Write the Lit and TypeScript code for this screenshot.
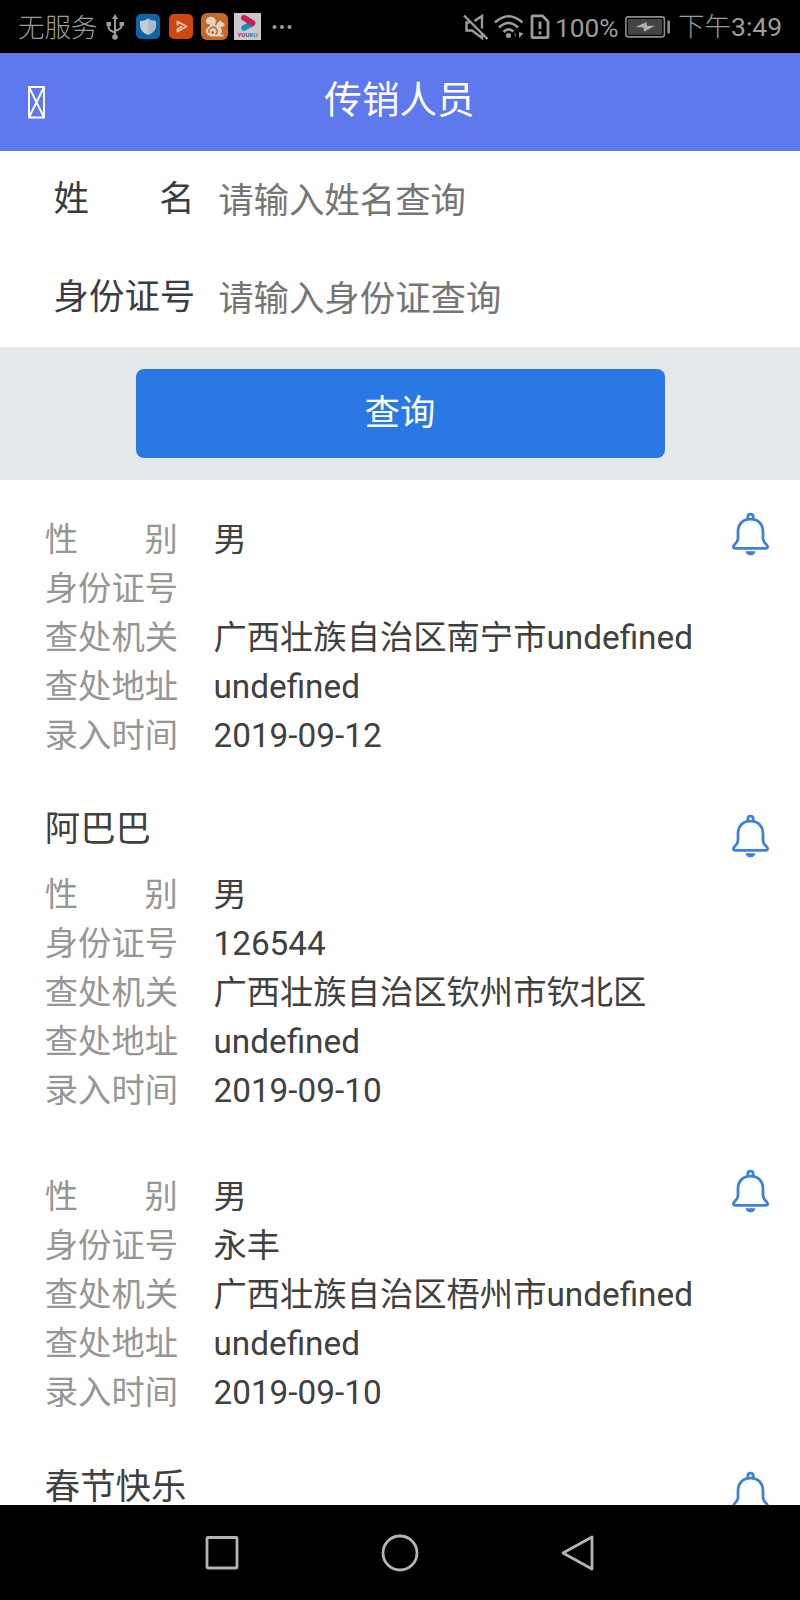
import { LitElement, html, css, svg } from "lit";
import { customElement, property } from "lit/decorators.js";

interface Person {
  name: string;
  details?: {
    gender: string;
    idNo: string;
    office: string;
    address: string;
    date: string;
  };
}

const people: Person[] = [
  { name: "", details: { gender: "男", idNo: "", office: "广西壮族自治区南宁市undefined", address: "undefined", date: "2019-09-12" } },
  { name: "阿巴巴", details: { gender: "男", idNo: "126544", office: "广西壮族自治区钦州市钦北区", address: "undefined", date: "2019-09-10" } },
  { name: "", details: { gender: "男", idNo: "永丰", office: "广西壮族自治区梧州市undefined", address: "undefined", date: "2019-09-10" } },
  { name: "春节快乐" },
];

@customElement("status-bar")
class StatusBar extends LitElement {
  static styles = css`
    :host {
      display: flex;
      justify-content: space-between;
      align-items: center;
      height: 53px;
      padding: 0 19px 0 18px;
      box-sizing: border-box;
      background: #000;
      color: #9c9c9c;
      font-size: 26.5px;
      font-weight: 300;
      white-space: nowrap;
    }
    svg { display: block; flex: none; }
    .group { display: flex; align-items: center; height: 53px; }
    .text { line-height: 40px; margin-top: 2px; }
    .usb { margin-left: 8px; }
    .shield { margin-left: 12px; }
    .play { margin-left: 9px; }
    .squirrel { margin-left: 8px; }
    .youku { margin-left: 6px; }
    .more { margin-left: 11px; }
    .wifi { margin-left: 5px; }
    .sim { margin-left: 6px; }
    .percent { margin-left: 5px; width: 70px; font-weight: 400; font-size: 26.3px; margin-top: 2px; }
    .time { margin-left: 7px; width: 103px; font-size: 26.5px; margin-top: 1px; }
    .digits { font-weight: 400; }
  `;

  render() {
    return html`
      <div class="group">
        <span class="text">无服务</span>
        <svg class="usb" width="18" height="26" viewBox="0 0 18 26" fill="none" stroke="#9c9c9c" stroke-width="2">
          <path d="M9 4V22M2.500 10V13Q2.500 16.500 9 18.500M15.500 10V12Q15.500 15 9 17" />
          <path d="M9 0L12 5H6Z M.5 8H5V12H.5Z M13.500 8H18V12H13.500Z" fill="#9c9c9c" stroke="none" />
          <circle cx="9" cy="23" r="2.800" fill="#9c9c9c" stroke="none" />
        </svg>
        <svg class="shield" width="24" height="25" viewBox="0 0 24 25">
          <rect width="24" height="25" rx="5" fill="#0a66a6" />
          <path d="M12 4.500Q15 7 20 7V11Q20 18 12 21Q4 18 4 11V7Q9 7 12 4.500Z" fill="#c5cdd4" />
          <path d="M12 4.500Q15 7 20 7V11Q20 18 12 21Z" fill="#adbbc7" />
        </svg>
        <svg class="play" width="24" height="25" viewBox="0 0 24 25">
          <rect width="24" height="25" rx="5" fill="#cf460e" />
          <path d="M8.500 11V7.500L17.500 12.500L8.500 17.500V15L12.500 12.800" fill="none" stroke="#d8c5bc" stroke-width="1.900" stroke-linejoin="round" stroke-linecap="round" />
        </svg>
        <svg class="squirrel" width="27" height="27" viewBox="0 0 27 27">
          <rect width="27" height="27" rx="6" fill="#c66a22" />
          <path d="M9 23C4 21 3.500 16.500 7.500 14C10 12 9 10.500 6.500 11C3.800 9.500 4.500 5 8.500 4C13 3 16 6.500 14.500 10.500C14 12 13.500 13 15.500 12C16 10 17.500 8.800 18.500 8.500L19 6.500L20.500 9C22.500 9.500 24 11 23.500 13L19.500 14.500C22 17 21 20 19 21.500H22.500V23.500H9Z" fill="#ded3c8" />
          <path d="M8.500 20A4 4 0 1 1 14.500 21.500" fill="none" stroke="#c66a22" stroke-width="1.500" />
          <circle cx="11.800" cy="19.500" r="1.500" fill="#c66a22" />
        </svg>
        <svg class="youku" width="27" height="27" viewBox="0 0 27 27">
          <rect width="27" height="27" fill="#c9c9cc" />
          <path d="M10 15L18.500 10.500" stroke="#168fba" stroke-width="5.500" stroke-linecap="round" />
          <path d="M10 4.800L18.300 10" stroke="#c71f58" stroke-width="6" stroke-linecap="round" />
          <text x="3.500" y="24.300" font-family="Roboto, sans-serif" font-size="6.200" font-weight="700" fill="#b72b5c" textLength="20">YO<tspan fill="#66508a">U</tspan><tspan fill="#1b89ad">KU</tspan></text>
        </svg>
        <svg class="more" width="20" height="6" viewBox="0 0 20 6" fill="#9c9c9c">
          <circle cx="2.500" cy="3" r="2" /><circle cx="10" cy="3" r="2" /><circle cx="17.500" cy="3" r="2" />
        </svg>
      </div>
      <div class="group">
        <svg width="26" height="26" viewBox="0 0 26 26" fill="none" stroke="#9c9c9c" stroke-width="2.400">
          <path d="M1 1.500L24.500 25" />
          <path d="M6.500 8.500H3.500V16.500H9L19 24V19M11.500 7L19 2V14.500" />
        </svg>
        <svg class="wifi" width="30" height="26" viewBox="0 0 30 26" fill="none" stroke="#9c9c9c" stroke-width="2.600">
          <path d="M1 8.500Q14.500 -4 28.500 8.500M5 13.500Q14.500 4.500 24 13.500M9.500 18Q14.500 13 19.500 17.500" />
          <circle cx="14.500" cy="21.500" r="2.600" fill="#9c9c9c" stroke="none" />
          <path d="M19.500 20.500L22 18V24Z" fill="#444" stroke="none" />
          <path d="M25 18V24L29.500 19.500Z" fill="#9c9c9c" stroke="none" />
        </svg>
        <svg class="sim" width="20" height="26" viewBox="0 0 20 26" fill="none" stroke="#9c9c9c" stroke-width="2.800">
          <path d="M2 2.800Q2 1.800 3 1.800H12.500L18 7.500V22.700Q18 23.700 17 23.700H3Q2 23.700 2 22.700Z" />
          <path d="M10 7.500V15M10 17.500V20.500" />
        </svg>
        <span class="text percent">100%</span>
        <svg class="battery" width="46" height="22" viewBox="0 0 46 22">
          <rect x=".9" y=".9" width="38.500" height="20" rx="2.500" fill="none" stroke="#8c8c8c" stroke-width="1.600" />
          <rect x="3" y="3" width="34.300" height="15.800" fill="#444" />
          <path d="M10.500 11L21.500 6L22 9.700H30L19 15.800L18.500 11.500Z" fill="#b0b0b0" />
          <rect x="42.300" y="4.500" width="2.700" height="13" rx="1" fill="#8c8c8c" />
        </svg>
        <span class="text time">下午<span class="digits">3:49</span></span>
      </div>
    `;
  }
}

@customElement("person-card")
class PersonCard extends LitElement {
  @property({ attribute: false }) person!: Person;

  static styles = css`
    :host {
      display: flex;
      justify-content: space-between;
      align-items: flex-start;
      padding: 21.5px 30px 22px 44.8px;
      color: #404040;
      font-size: 33.3px;
    }
    .name { font-size: 35.4px; line-height: 53.4px; }
    .rows { margin-top: 13.2px; }
    .row { display: flex; height: 49.05px; line-height: 49px; white-space: nowrap; }
    .label { display: flex; justify-content: space-between; width: 133px; margin-right: 35.7px; color: #969696; }
    .bell { display: block; flex: none; margin-top: 10.6px; }
  `;

  private row(label: string, value: string) {
    return html`<div class="row">
      <span class="label">${[...label].map((c) => html`<span>${c}</span>`)}</span>
      <span>${value}</span>
    </div>`;
  }

  render() {
    const { name, details: d } = this.person;
    return html`
      <div>
        ${name ? html`<div class="name">${name}</div>` : ""}
        ${d
          ? html`<div class="rows">
              ${this.row("性别", d.gender)}
              ${this.row("身份证号", d.idNo)}
              ${this.row("查处机关", d.office)}
              ${this.row("查处地址", d.address)}
              ${this.row("录入时间", d.date)}
            </div>`
          : ""}
      </div>
      <svg class="bell" width="39" height="45" viewBox="0 0 39 45" fill="none" stroke="#3f80d8" stroke-width="2.800" stroke-linejoin="round">
        <path d="M16.800 7.500V4.900A2.700 2.700 0 0 1 22.200 4.900V7.500" stroke-width="2.800" />
        <path d="M19.500 7.200C11.500 7.200 7 12.500 7 20V26.500C7 31 2.400 32.300 2.400 34.500Q2.400 36.300 4.500 36.300H34.500Q36.600 36.300 36.600 34.500C36.600 32.300 32 31 32 26.500V20C32 12.500 27.500 7.200 19.500 7.200Z" />
        <path d="M15 39.800H24Q23 43 19.500 43T15 39.800Z" fill="#3f80d8" stroke-width="1" />
      </svg>
    `;
  }
}

@customElement("app-root")
class AppRoot extends LitElement {
  static styles = css`
    :host {
      display: flex;
      flex-direction: column;
      width: 800px;
      height: 1600px;
      overflow: hidden;
      background: #fff;
      font-family: Roboto, "Noto Sans CJK SC", sans-serif;
    }
    status-bar, .header, .form, .action, .nav { flex: none; }
    .header {
      display: grid;
      grid-template-columns: 1fr auto 1fr;
      align-items: center;
      height: 97.5px;
      padding: 0 28px;
      background: #5e78ee;
      color: #fff;
    }
    .title { font-size: 37.6px; line-height: 56px; margin: -3px 1px 0 0; }
    .back { display: block; margin-top: 1px; }
    .form { padding-left: 53.6px; height: 196.2px; }
    .field { display: flex; height: 98px; align-items: center; font-size: 35.4px; line-height: 52px; }
    .label { display: flex; justify-content: space-between; width: 141px; margin-right: 23.6px; margin-top: -1px; color: #3a3c42; }
    .input {
      flex: 1;
      min-width: 0;
      border: 0;
      padding: 0;
      margin-top: 2.5px;
      outline: none;
      background: none;
      font: inherit;
      height: 52px;
    }
    .input::placeholder { color: #757575; opacity: 1; }
    .action {
      display: flex;
      justify-content: center;
      align-items: center;
      height: 133.3px;
      background: #e5e9ee;
    }
    .query {
      width: 529px;
      height: 89px;
      border: 0;
      border-radius: 8px;
      padding: 0 0 8px;
      background: #2a78e4;
      color: #fff;
      font: inherit;
      font-size: 35.4px;
    }
    .list { flex: 1; min-height: 0; overflow: hidden; }
    .nav {
      display: flex;
      justify-content: center;
      align-items: center;
      gap: 140px;
      height: 95px;
      background: #000;
    }
    .key { display: block; }
  `;

  private field(label: string, hint: string) {
    return html`<div class="field">
      <span class="label">${[...label].map((c) => html`<span>${c}</span>`)}</span>
      <input class="input" placeholder=${hint} />
    </div>`;
  }

  private key(shape: unknown) {
    return html`<svg class="key" width="38" height="38" viewBox="0 0 38 38" fill="none" stroke="#b4b4b4" stroke-width="2.800" stroke-linejoin="round">${shape}</svg>`;
  }

  render() {
    return html`
      <status-bar></status-bar>
      <div class="header">
        <svg class="back" width="17" height="33" viewBox="0 0 17 33" fill="none" stroke="#fff" stroke-width="1.900">
          <path d="M1 1H16V31.500H1ZM1 1L16 31.500M16 1L1 31.500" />
        </svg>
        <span class="title">传销人员</span>
      </div>
      <div class="form">
        ${this.field("姓名", "请输入姓名查询")}
        ${this.field("身份证号", "请输入身份证查询")}
      </div>
      <div class="action"><button class="query">查询</button></div>
      <div class="list">${people.map((p) => html`<person-card .person=${p}></person-card>`)}</div>
      <div class="nav">
        ${this.key(svg`<rect x="4" y="3.500" width="30" height="30.500" rx="1" />`)}
        ${this.key(svg`<circle cx="19" cy="19" r="17" />`)}
        ${this.key(svg`<path d="M33 3V35L4 19Z" />`)}
      </div>
    `;
  }
}
